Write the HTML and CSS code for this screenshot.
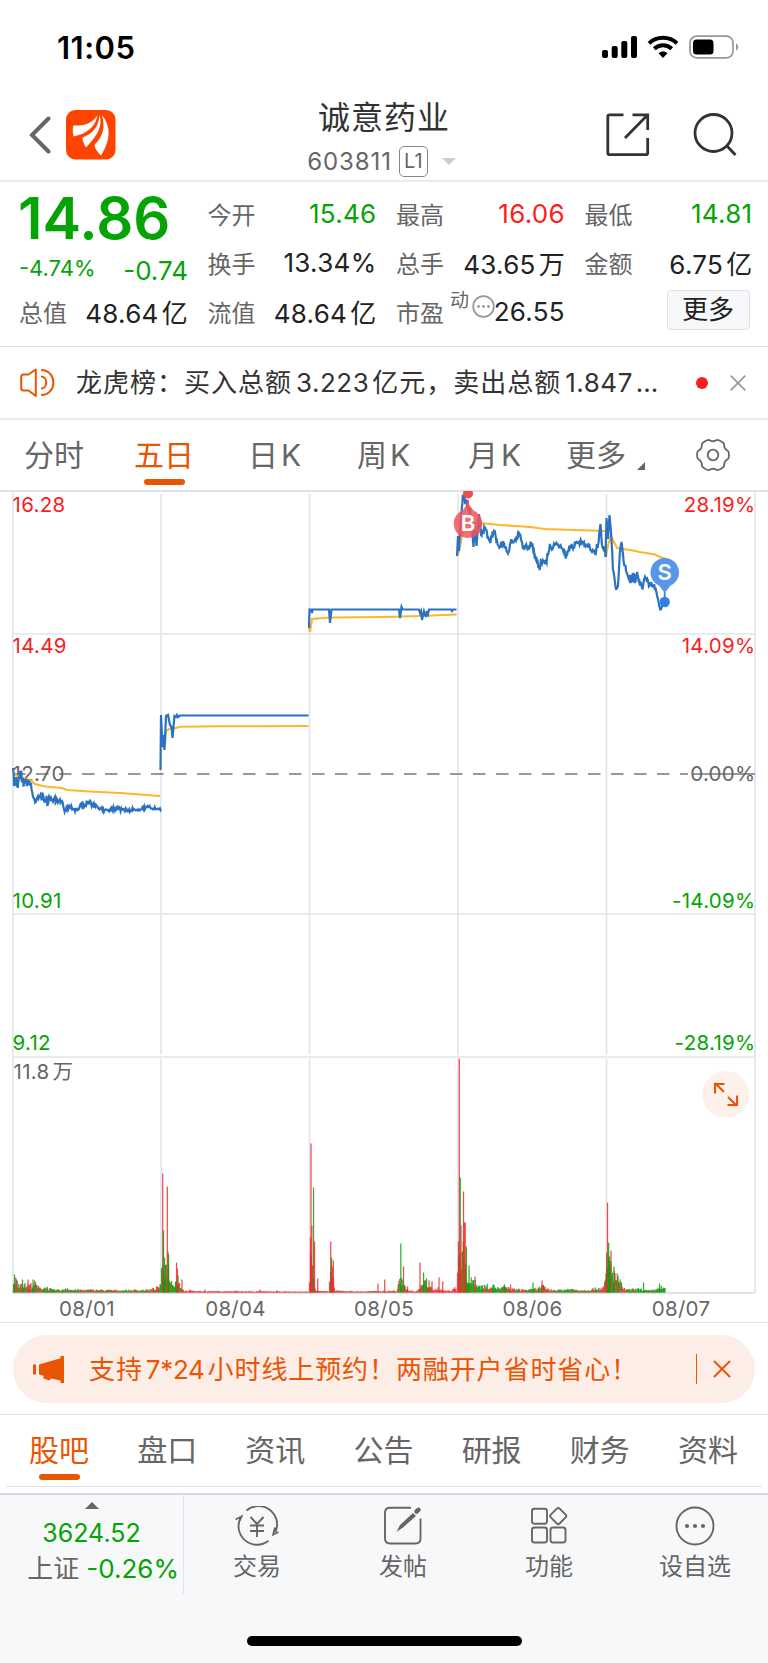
FILE: index.html
```html
<!DOCTYPE html>
<html lang="zh-CN">
<head>
  <meta charset="UTF-8" />
  <title>诚意药业 603811</title>
  <meta name="viewport" content="width=device-width, initial-scale=1.0" />
  <link rel="stylesheet" href="styles.css">
</head>
<body>
  <div class="statusbar">
    <span class="time">11:05</span>
    <svg width="138" height="24" viewBox="0 0 138 24">
      <rect x="0" y="15" width="6" height="8" rx="2"/>
      <rect x="9.7" y="11" width="6" height="12" rx="2"/>
      <rect x="19.3" y="6" width="6" height="17" rx="2"/>
      <rect x="29" y="1" width="6" height="22" rx="2"/>
      <g fill="none" stroke="#000" stroke-width="4">
        <path d="M47 8.300C54.500 .800 67.500 .800 75 8.300"/>
        <path d="M52.300 13.800C57.300 9 64.700 9 69.700 13.800"/>
      </g>
      <path d="M56.500 18.300C59 16 63 16 65.500 18.300L61 23Z"/>
      <rect x="88" y="1.200" width="43" height="21.600" rx="6.500" fill="none" stroke="#999" stroke-width="1.700"/>
      <rect x="91" y="4.500" width="20.500" height="15" rx="3.500"/>
      <path d="M134 8.500C137 9.500 137 14.500 134 15.500Z" fill="#999"/>
    </svg>
  </div>

  <header class="header">
    <div class="side">
      <svg class="back" width="23" height="38" viewBox="0 0 23 38"><path d="M19.500 2.500L3 19L19.500 35.500" fill="none" stroke="#666" stroke-width="4" stroke-linecap="round"/></svg>
      <svg width="50" height="50" viewBox="0 0 50 50">
        <rect width="49.500" height="49.500" rx="9.500" fill="#ff4400"/>
        <g fill="#fff">
          <path d="M31.500 5C30 16 21 24 7.500 26.500Q6 20 7.500 15.500C19 16 27 13 31.500 5Z"/>
          <path d="M33.500 5C37 17 31 26 20 37.500Q16 31 16.500 27.500C26 24 33 17 33.500 5Z"/>
          <path d="M36 5C45 16 45 30 35 45.500Q29 40 28.500 35C38 25 39 17 36 5Z"/>
        </g>
      </svg>
    </div>
    <div class="title">
      <h1>诚意药业</h1>
      <div class="code">603811<span class="level">L1</span><i class="down"></i></div>
    </div>
    <div class="side tools">
      <svg width="44" height="44" viewBox="0 0 44 44" fill="none" stroke="#333" stroke-width="2.800">
        <path d="M17.500 1.800H3.500Q1.800 1.800 1.800 3.500V40Q1.800 41.700 3.500 41.700H40Q41.700 41.700 41.700 40V25M26.500 1.800H41.700V17M41 2.500L19 25"/>
      </svg>
      <svg width="44" height="44" viewBox="0 0 44 44" fill="none" stroke="#333" stroke-width="2.800">
        <circle cx="20.500" cy="20" r="18.500"/><path d="M34 33L42.500 42"/>
      </svg>
    </div>
  </header>

  <section class="quote">
    <div class="now">
      <div class="price">14.86</div>
      <div class="change"><span class="pct">-4.74%</span><span>-0.74</span></div>
      <div class="cell"><label>总值</label><b>48.64<em>亿</em></b></div>
    </div>
    <div class="col">
      <div class="cell"><label>今开</label><b class="green">15.46</b></div>
      <div class="cell"><label>换手</label><b>13.34%</b></div>
      <div class="cell"><label>流值</label><b>48.64<em>亿</em></b></div>
    </div>
    <div class="col">
      <div class="cell"><label>最高</label><b class="red">16.06</b></div>
      <div class="cell"><label>总手</label><b>43.65<em>万</em></b></div>
      <div class="cell pe"><label>市盈<sup>动</sup></label>
        <svg width="23" height="23" viewBox="0 0 23 23"><circle cx="11.500" cy="11.500" r="10.300" fill="none" stroke="#999" stroke-width="1.800"/><g fill="#999"><circle cx="6.500" cy="11.500" r="1.400"/><circle cx="11.500" cy="11.500" r="1.400"/><circle cx="16.500" cy="11.500" r="1.400"/></g></svg>
        <b>26.55</b></div>
    </div>
    <div class="col">
      <div class="cell"><label>最低</label><b class="green">14.81</b></div>
      <div class="cell"><label>金额</label><b>6.75<em>亿</em></b></div>
      <div class="cell"><button class="more">更多</button></div>
    </div>
  </section>

  <section class="notice">
    <svg width="35" height="30" viewBox="0 0 35 30" fill="none" stroke="#ea5504" stroke-width="2">
      <path d="M15.800 1.500V28L8.500 22.500H3.500Q1.200 22.500 1.200 20V9Q1.200 6.500 3.500 6.500H8.500Z" stroke-linejoin="round"/>
      <path d="M21 8.500C28 8.500 28 20.500 21 20.500M21 2C37.500 2 37.500 27 21 27"/>
    </svg>
    <p>龙虎榜：买入总额<span class="num">3.223</span>亿元，卖出总额<span class="num">1.847</span>…</p>
    <i class="dot"></i>
    <svg width="16" height="16" viewBox="0 0 16 16"><path d="M.700 .700L15.300 15.300M15.300 .700L.700 15.300" stroke="#999" stroke-width="1.700"/></svg>
  </section>

  <nav class="periods">
    <a>分时</a>
    <a class="on">五日</a>
    <a>日<span>K</span></a>
    <a>周<span>K</span></a>
    <a>月<span>K</span></a>
    <a class="drop">更多<i></i></a>
    <svg width="34" height="34" viewBox="-17 -17 34 34" fill="none" stroke="#666" stroke-width="1.800">
      <path id="gear"/><circle r="5.300"/>
    </svg>
  </nav>

  <svg class="chart" width="768" height="831" viewBox="0 491 768 831">
    <g id="grid" stroke="#e2e5ee" stroke-width="1.700"></g>
    <path d="M13 774H688" stroke="#777" stroke-width="1.700" stroke-dasharray="12.500 10.500" />
    <path d="M692 774H755" stroke="#777" stroke-width="1.700" />
    <g class="axis">
      <text class="r" x="12.500" y="511.500">16.28</text>
      <text class="r" x="12.500" y="652.500">14.49</text>
      <text class="n" x="12.500" y="780.500">12.70</text>
      <text class="g" x="12.500" y="908">10.91</text>
      <text class="g" x="12.500" y="1049.500">9.12</text>
      <g text-anchor="end">
        <text class="r" x="755.500" y="511.500">28.19%</text>
        <text class="r" x="755.500" y="652.500">14.09%</text>
        <text class="n" x="755.500" y="780.500">0.00%</text>
        <text class="g" x="755.500" y="908">-14.09%</text>
        <text class="g" x="755.500" y="1049.500">-28.19%</text>
      </g>
      <text class="n" x="13.500" y="1078.500">11.8<tspan dx="3">万</tspan></text>
      <g class="n" text-anchor="middle">
        <text x="87" y="1315.500">08/01</text>
        <text x="235.500" y="1315.500">08/04</text>
        <text x="384" y="1315.500">08/05</text>
        <text x="532.500" y="1315.500">08/06</text>
        <text x="681" y="1315.500">08/07</text>
      </g>
    </g>
    <g id="volume"></g>
    <g id="avg" fill="none" stroke="#ffb52b" stroke-width="2.100"></g>
    <g id="line" fill="none" stroke="#2b72c2" stroke-width="2.200"></g>
    <g class="pin">
      <path d="M468 500V510" stroke="#f04b50" stroke-width="1.800"/>
      <circle cx="468" cy="493.500" r="5" fill="#f04b50"/>
      <path d="M468 503L473.500 510.500A14.300 14.300 0 1 1 462.500 510.500Z" fill="#ef5559" fill-opacity=".85"/>
      <text x="468" y="531">B</text>
    </g>
    <g class="pin">
      <path d="M664.700 592V600" stroke="#2f80e2" stroke-width="1.800"/>
      <circle cx="664.700" cy="602" r="5.200" fill="#2f80e2"/>
      <path d="M664.700 593L659 585.500A14.300 14.300 0 1 1 670.500 585.500Z" fill="#4f90e8" fill-opacity=".95"/>
      <text x="664.700" y="580">S</text>
    </g>
    <circle cx="725.700" cy="1094.500" r="23.500" fill="#fdf1eb"/>
    <path d="M724 1092L715 1083M715 1093.500V1084H724.500M728 1097L736.500 1105.500M727.500 1105H737V1095.500" fill="none" stroke="#ea5504" stroke-width="2.100"/>
  </svg>

  <section class="promo">
    <div class="banner">
      <svg width="31" height="27" viewBox="0 0 31 27" fill="#ea5504"><path d="M0 8.500H3V18.500H0ZM6 8.500L27.500 2.200V0H31V27H27.500V24.500L18 22.500L16.500 24.500L10.500 22.500V19.800L6 18.500Z"/></svg>
      <p>支持<span class="num">7*24</span>小时线上预约！两融开户省时省心！</p>
      <i></i>
      <svg width="18" height="18" viewBox="0 0 18 18"><path d="M1 1L17 17M17 1L1 17" stroke="#ea5504" stroke-width="2"/></svg>
    </div>
  </section>

  <nav class="tabs">
    <a class="on">股吧</a><a>盘口</a><a>资讯</a><a>公告</a><a>研报</a><a>财务</a><a>资料</a>
  </nav>

  <footer class="footer">
    <div class="bar">
      <div class="index">
        <i></i>
        <div class="value">3624.52</div>
        <div class="rate"><span>上证</span>-0.26%</div>
      </div>
      <a>
        <svg width="44" height="40" viewBox="0 0 44 40">
          <path d="M11.500 4.500A18.500 18.500 0 0 1 40.500 26M33.500 34.800A18.500 18.500 0 0 1 5.500 12M.500 13.500L6.500 10.500L4.500 15M40 21.500L38.200 28.500L43.500 26M15.500 11L22 18L28.500 11M15 19.500H29M15 25H29M22 18V31"/>
        </svg>
        交易
      </a>
      <a>
        <svg width="44" height="40" viewBox="0 0 44 40">
          <path d="M30 1.800H9Q4 1.800 4 6.800V32.500Q4 37.500 9 37.500H34.500Q39.500 37.500 39.500 32.500V12.500"/>
          <path d="M15.500 26L19 19L32 7L35 10L22 21.500Z" fill="#666" stroke="none"/>
          <path d="M35.500 5.500L37.500 3.800" stroke-width="4.500" stroke-linecap="round"/>
        </svg>
        发帖
      </a>
      <a>
        <svg width="44" height="40" viewBox="0 0 44 40">
          <rect x="5" y="2.800" width="15" height="15" rx="2.500"/><rect x="5" y="21.500" width="15" height="15" rx="2.500"/>
          <rect x="23.500" y="21.500" width="15" height="15" rx="2.500"/><rect x="25" y="3.800" width="12.500" height="12.500" rx="2" transform="rotate(45 31.250 10)"/>
        </svg>
        功能
      </a>
      <a>
        <svg width="44" height="40" viewBox="0 0 44 40">
          <circle cx="22" cy="20" r="18.500"/>
          <g fill="#666" stroke="none"><circle cx="14" cy="20" r="2.100"/><circle cx="22" cy="20" r="2.100"/><circle cx="30" cy="20" r="2.100"/></g>
        </svg>
        设自选
      </a>
    </div>
    <div class="home"></div>
  </footer>

  <script src="chart.js"></script>
</body>
</html>
```
FILE: styles.css
```css
* {
  box-sizing: border-box;
}
body {
  margin: 0;
  width: 768px;
  height: 1663px;
  overflow: hidden;
  display: flex;
  flex-direction: column;
  background-color: #fff;
  color: #222;
  font-family: Inter, "Noto Sans CJK SC", sans-serif;
  font-size: 25px;
}
svg {
  display: block;
  flex: none;
}
i, em, b {
  font-style: normal;
  font-weight: normal;
}
p, h1 {
  margin: 0;
  font-weight: normal;
}
.green {
  color: #05a305;
}
.red {
  color: #fa1e1e;
}

/* status bar */
.statusbar {
  height: 92px;
  padding: 2px 28px 0 57px;
  display: flex;
  align-items: center;
  justify-content: space-between;
}
.time {
  font-size: 31px;
  font-weight: 600;
  letter-spacing: 0.5px;
  color: #000;
}

/* header */
.header {
  height: 90px;
  border-bottom: 2px solid #ebebeb;
  display: grid;
  grid-template-columns: 200px 1fr 200px;
}
.side {
  display: flex;
  align-items: center;
  padding: 0 0 2px 29px;
  gap: 14px;
}
.tools {
  padding: 0 0 2px 38px;
  gap: 43px;
}
.title {
  text-align: center;
}
.title h1 {
  font-size: 32px;
  line-height: 52px;
  letter-spacing: 1px;
  color: #333;
}
.code {
  display: flex;
  align-items: center;
  justify-content: center;
  height: 34px;
  font-size: 24px;
  letter-spacing: 0.9px;
  color: #666;
  padding-right: 5px;
}
.level {
  width: 29px;
  height: 31px;
  border: 1.500px solid #888;
  border-radius: 5px;
  font-size: 20px;
  line-height: 29px;
  letter-spacing: 0;
  margin-left: 7px;
}
.down {
  border: 7px solid transparent;
  border-top-color: #ccc;
  border-bottom: 0;
  margin-left: 14px;
}

/* quote */
.quote {
  height: 165px;
  padding: 7px 15px 0 19px;
  border-bottom: 1.500px solid #e0e0e0;
  display: grid;
  grid-template-columns: 169px 169px 169px 168px;
  column-gap: 19.500px;
}
.cell {
  height: 49px;
  display: flex;
  align-items: center;
  justify-content: space-between;
}
.cell label {
  font-size: 24px;
  color: #666;
}
.cell b {
  font-size: 26px;
  letter-spacing: 0.3px;
  white-space: nowrap;
}
.cell em {
  margin-left: 3px;
}
.price {
  height: 59px;
  font-size: 58px;
  font-weight: 600;
  line-height: 58px;
  margin-left: -1px;
  color: #05a305;
}
.change {
  height: 39px;
  padding-top: 5px;
  display: flex;
  justify-content: space-between;
  align-items: center;
  font-size: 26px;
  color: #05a305;
}
.pct {
  font-size: 22px;
  line-height: 26px;
  padding-bottom: 4px;
}
.pe sup {
  font-size: 19px;
  line-height: 0;
  position: relative;
  top: -6px;
  left: 6px;
}
.pe svg {
  margin: -10px -11px 0 0;
}
.more {
  margin: -3px 3px 0 auto;
  width: 83px;
  height: 40px;
  border: 1.500px solid #dde0e8;
  border-radius: 4px;
  background-color: #f7f8fa;
  font: inherit;
  font-size: 26px;
  line-height: 36px;
  color: #222;
  padding: 0;
}

/* notice */
.notice {
  height: 73px;
  padding: 0 22px 0 20px;
  border-bottom: 2px solid #ebebeb;
  display: flex;
  align-items: center;
}
.notice p {
  flex: 1;
  margin: -5px 0 0 21px;
  font-size: 26px;
  letter-spacing: 1px;
  white-space: nowrap;
  color: #333;
}
.num {
  margin: 0 3px 0 4px;
  letter-spacing: 0.5px;
}
.dot {
  width: 12px;
  height: 12px;
  border-radius: 50%;
  background-color: #fa1e1e;
  margin-right: 22px;
}

/* period tabs */
.periods {
  height: 72px;
  padding: 0 38px 0 24px;
  border-bottom: 2px solid #dfe2ea;
  display: grid;
  grid-template-columns: 110px 114px 109px 111px 98px 1fr auto;
  align-items: center;
  font-size: 30px;
  line-height: 44px;
  color: #666;
}
.periods a, .tabs a {
  position: relative;
  justify-self: start;
  margin-top: -1px;
}
.periods span {
  margin-left: 3px;
}
.on {
  color: #ea5504;
}
.on::after {
  content: "";
  position: absolute;
  left: 50%;
  bottom: -8px;
  width: 41px;
  height: 6px;
  margin-left: -20px;
  border-radius: 3px;
  background-color: #ea5504;
}
.drop {
  display: flex;
  align-items: flex-end;
}
.drop i {
  border: 4px solid #666;
  border-left-color: transparent;
  border-top-color: transparent;
  margin: 0 0 7px 11px;
}

/* chart */
.chart {
  margin-top: -1px;
}
.axis {
  font-size: 20.5px;
}
.axis .r { fill: #fa1e1e; }
.axis .g { fill: #05a305; }
.axis .n { fill: #666; }
.axis text {
  letter-spacing: 0.3px;
}
.pin text {
  fill: #fff;
  font-size: 22px;
  font-weight: 600;
  text-anchor: middle;
}

/* promo banner */
.promo {
  height: 93px;
  padding: 12px 13px 0;
  border-top: 1.500px solid #e2e3e8;
  border-bottom: 1.500px solid #e2e3e8;
}
.banner {
  height: 68px;
  padding: 0 24px 0 20px;
  border-radius: 34px;
  background-color: #fcede6;
  color: #ea5504;
  display: flex;
  align-items: center;
}
.banner p {
  flex: 1;
  margin: -4px 0 0 25px;
  font-size: 26px;
  letter-spacing: 0.9px;
  white-space: nowrap;
}
.banner .num {
  margin: 0 3px;
  letter-spacing: -0.3px;
}
.banner i {
  width: 1.500px;
  height: 30px;
  background-color: #ea5504;
  margin-right: 16px;
}

/* content tabs */
.tabs {
  height: 72px;
  margin: 0 6px 6px;
  padding: 0 24px 0 23px;
  border-bottom: 1.500px solid #e2e3e8;
  display: flex;
  align-items: center;
  justify-content: space-between;
  font-size: 30px;
  line-height: 44px;
  color: #666;
}

/* footer */
.footer {
  flex: 1;
  border-top: 2px solid #d5d8de;
  background-color: #f7f8fa;
}
.bar {
  display: grid;
  grid-template-columns: 184px repeat(4, 146px);
  height: 99px;
}
.bar a {
  display: flex;
  flex-direction: column;
  align-items: center;
  padding-top: 11px;
  font-size: 24px;
  line-height: 42px;
  color: #666;
}
.bar svg {
  fill: none;
  stroke: #666;
  stroke-width: 1.900;
}
.index {
  border-right: 1.500px solid #e2e3e8;
  text-align: center;
  color: #05a305;
  line-height: 36px;
  white-space: nowrap;
}
.index i {
  display: block;
  width: 14px;
  margin: 7px auto 6px;
  border: 7px solid transparent;
  border-bottom-color: #666;
  border-top: 0;
}
.rate {
  font-size: 26px;
  text-align: right;
  padding-right: 4px;
}
.index span {
  color: #666;
  margin-right: 7px;
}
.home {
  width: 275px;
  height: 10px;
  margin: 42px auto 0;
  border-radius: 5px;
  background-color: #000;
}
```
FILE: chart.js
```js
const NS = "http://www.w3.org/2000/svg";

function add(id, tag, attrs) {
  const el = document.createElementNS(NS, tag);
  for (const key in attrs) el.setAttribute(key, attrs[key]);
  document.getElementById(id).appendChild(el);
}

// fixed sequence so the chart looks the same on every load
let seed = 7;
function rnd() {
  seed = (seed * 16807) % 2147483647;
  return seed / 2147483647;
}

// grid
[161, 309.5, 458, 606.5].forEach(x => {
  add("grid", "path", { d: `M${x} 494V1054.5M${x} 1059V1293` });
});
add("grid", "path", { d: "M755 491V1293M13 491V1293M13 634H755M13 914H755M13 1057H755" });
add("grid", "path", { d: "M13 1293H755", stroke: "#d5d8e0" });

// average lines
[
  "13,774 20,777 30,780 35,784 45,786.5 62,788 67,790 90,791.5 120,793 160,796",
  "163,748 165,745 166,731 170,728.500 176,728 180,726.700 220,726.300 308.500,726",
  "309,625 310,632 312,619 330,617.500 384,617 420,616 456.500,614.500",
  "458,555 461,542 463,528 467,524 475,523 485,523.500 500,525 530,527 545,529 605,531",
  "606,556 608,545 611,536 617,548 620,548.500 630,550 640,552 655,554.500 660,557 666,559"
].forEach(points => add("avg", "polyline", { points }));

// price lines: x, y, noise
const days = [
  [[13,768,0],[14,786,6],[16,780,8],[18,785,7],[20,771,6],[23,780,6],[27,782,5],[31,784,5],[33,797,3],[35,801,3],[38,796,3],[41,796,5],[46,801,5],[51,798,4],[56,802,3],[62,802,2],[65,810,2],[70,806,2],[76,810,3],[84,804,4],[91,803,4],[98,808,2],[105,810,2],[118,807,3],[122,810,2],[133,810,2],[147,807,2],[161,810,1]],
  [[160.5,770,0],[161,715,0],[162.5,747,0],[163,735,0],[164.500,750,0],[166,716,0],[168,715,0],[170,725,0],[171.500,727,0],[172.500,738,0],[174.500,716,0],[176,717,0],[177,715,0],[178,717,0],[180,715.500,0],[308.500,715.500,0]],
  [[309,628,0],[309.500,609.500,0],[311.500,609.500,0],[312,613,0],[312.500,609.500,0],[329,609.500,0],[330,623,0],[331.500,609.500,0],[399,609.500,0],[400,618,0],[401.500,607,0],[402.500,609.500,0],[419,609.500,0],[420,613,0],[421,611,0],[422,620,0],[424,611,0],[426,617,0],[427,611,0],[428,614,0],[429,609.500,0],[451,609.500,0],[452,611,0],[453,609.500,0],[456.500,609.500,0]],
  [[457,556,0],[458,536,0],[459,551,0],[461,515,3],[463,496,3],[466,502,5],[470,508,8],[472,525,6],[473.500,547,0],[475,526,4],[476.500,546,0],[479,514,4],[481,535,4],[485,527,5],[488,537,4],[490,543,5],[495,532,7],[498,545,4],[504,543,4],[508,553,4],[511,540,3],[516,541,3],[519,533,4],[523,546,3],[528,549,3],[532,543,3],[535,556,3],[539,566,4],[543,561,4],[546,562,4],[550,547,4],[555,545,3],[560,546,3],[564,550,3],[566,557,2],[569,548,3],[580,542,3],[590,548,3],[595,554,4],[598,545,4],[600.500,524,0],[602,545,3],[605,550,2],[606,557,0]],
  [[605.500,557,0],[606.500,518,0],[608,539,0],[609.500,515,0],[611,532,2],[613,570,4],[616,589,1],[618,585,3],[620,552,3],[621.500,542,0],[623,554,4],[626,571,4],[630,580,5],[634,580,6],[638,576,6],[642,588,3],[645,577,4],[650,585,3],[653,585,4],[656,590,2],[659,605,3],[661,609,1],[663,602,3],[664.700,600,0]]
];
days.forEach(keys => {
  const pts = [];
  for (let k = 0; k < keys.length - 1; k++) {
    const [x0, y0, n0] = keys[k];
    const [x1, y1, n1] = keys[k + 1];
    pts.push(x0 + "," + Math.max(492, y0));
    if (!n0 && !n1) continue;
    for (let x = x0 + 0.65; x < x1; x += 0.65) {
      const t = (x - x0) / (x1 - x0);
      const y = y0 + (y1 - y0) * t + (rnd() - 0.5) * 2.8 * (n0 + (n1 - n0) * t) * (0.3 + rnd() * 0.7);
      pts.push(x.toFixed(1) + "," + Math.max(492, y).toFixed(1));
    }
  }
  const last = keys[keys.length - 1];
  pts.push(last[0] + "," + last[1]);
  add("line", "polyline", { points: pts.join(" ") });
});

// volume
const BASE = 1292.5;
function bar(x, h, color) {
  add("volume", "rect", { x: x - 0.6, y: BASE - h, width: 1.25, height: h, fill: color === "r" ? "#f8282d" : "#0b9d0b", "fill-opacity": 0.85 });
}
// x, height, share of green bars
const base = [
  [13,16,.7],[20,11,.6],[26,8,.5],[32,9,.7],[35,11,.8],[39,5,.6],[47,6,.6],[52,3,.6],[63,3,.6],[67,6,.8],[71,3,.6],[90,3,.5],[120,2.500,.5],[150,3,.6],[158,6,.9],[161,8,.8],[162,35,.6],[165,30,.9],[168,30,.4],[171,12,.9],[175,13,.7],[179,11,.5],[182,5,.3],[184,2,.1],[200,1.500,.1],[309,1,0],[310,50,.1],[312,30,.2],[315,4,.2],[320,2,.1],[329,1,0],[330,18,.4],[333,18,.3],[335,2,.1],[360,1.200,.1],[397,2,.2],[400,15,.6],[404,14,.4],[406,3,.2],[416,1,.2],[420,5,.3],[424,12,.6],[429,9,.5],[433,2,.1],[438,5,.1],[443,2,.1],[451,2,.3],[454,6,.1],[457,2,.1],[458,45,.2],[462,42,.4],[465,50,.3],[467,12,.9],[470,12,.9],[474,16,.9],[478,8,.6],[483,7,.5],[492,8,.8],[500,4,.7],[505,7,.8],[510,4,.6],[530,3,.7],[538,5,.8],[543,7,.5],[550,3,.4],[562,3,.6],[568,4,.8],[585,2.500,.5],[598,5,.5],[604,6,.2],[606,20,.5],[609,38,.8],[613,24,.7],[618,16,.2],[622,8,.2],[626,3,.9],[640,4,.7],[648,2,.8],[656,3,.8],[660,7,.9],[665,4,.2]
];
for (let k = 0; k < base.length - 1; k++) {
  const [x0, h0, g] = base[k];
  const [x1, h1] = base[k + 1];
  for (let x = x0 + 0.5; x < x1 + 0.2; x += 0.75) {
    const h = h0 + (h1 - h0) * (x - x0) / (x1 - x0);
    bar(x, h * (0.4 + rnd() * 0.75), rnd() < g ? "g" : "r");
  }
}
[
  [14.500,18,"g"],[22.500,13,"g"],[28,13,"r"],[33,13,"g"],
  [162.700,119,"r"],[163.500,62,"g"],[164.500,35,"g"],[167.300,106,"r"],[168,41,"r"],[168.500,38,"g"],[176.500,30,"r"],[177.300,24,"r"],[178,17,"g"],[182,13,"r"],
  [190,3,"r"],[205,3,"r"],[236,2,"r"],[260,3,"r"],[277,2,"r"],
  [310.500,55,"r"],[311,149,"r"],[311.800,67,"r"],[313.500,105,"g"],[314.500,51,"r"],[317.700,14,"r"],
  [330.700,51,"r"],[331.500,35,"g"],[332.300,26,"r"],[333.300,32,"r"],[378,9,"r"],[384.700,13,"r"],
  [400.800,49,"g"],[403.500,26,"r"],[407.500,6,"r"],[420,30,"r"],[423.500,20,"g"],[426.500,14,"g"],[429,12,"r"],[432,11,"r"],[439,15,"r"],[442.700,11,"r"],
  [458.500,51,"r"],[459.300,234,"r"],[460.200,115,"g"],[461,67,"r"],[463.500,101,"r"],[464.300,70,"r"],[465.200,70,"r"],[466.300,46,"g"],[469,27,"g"],
  [475,16,"r"],[493,8,"g"],[504.500,8,"g"],[510.500,8,"r"],[533,10,"g"],[542,12,"r"],
  [606.700,40,"g"],[607.500,90,"r"],[608.600,50,"g"],[609.500,36,"g"],[611,42,"r"],[614,26,"g"],[643.500,10,"g"],[659.500,9,"g"]
].forEach(b => bar(...b));

// gear outline, six teeth
let d = "";
for (let a = 0; a <= 360; a += 4) {
  const r = 14.7 + 1.2 * Math.tanh(2 * (0.45 - Math.cos(a * 6 * Math.PI / 180)));
  const t = (a - 90) * Math.PI / 180;
  d += (a ? "L" : "M") + (r * Math.cos(t)).toFixed(2) + " " + (r * Math.sin(t)).toFixed(2);
}
document.getElementById("gear").setAttribute("d", d + "Z");
```
